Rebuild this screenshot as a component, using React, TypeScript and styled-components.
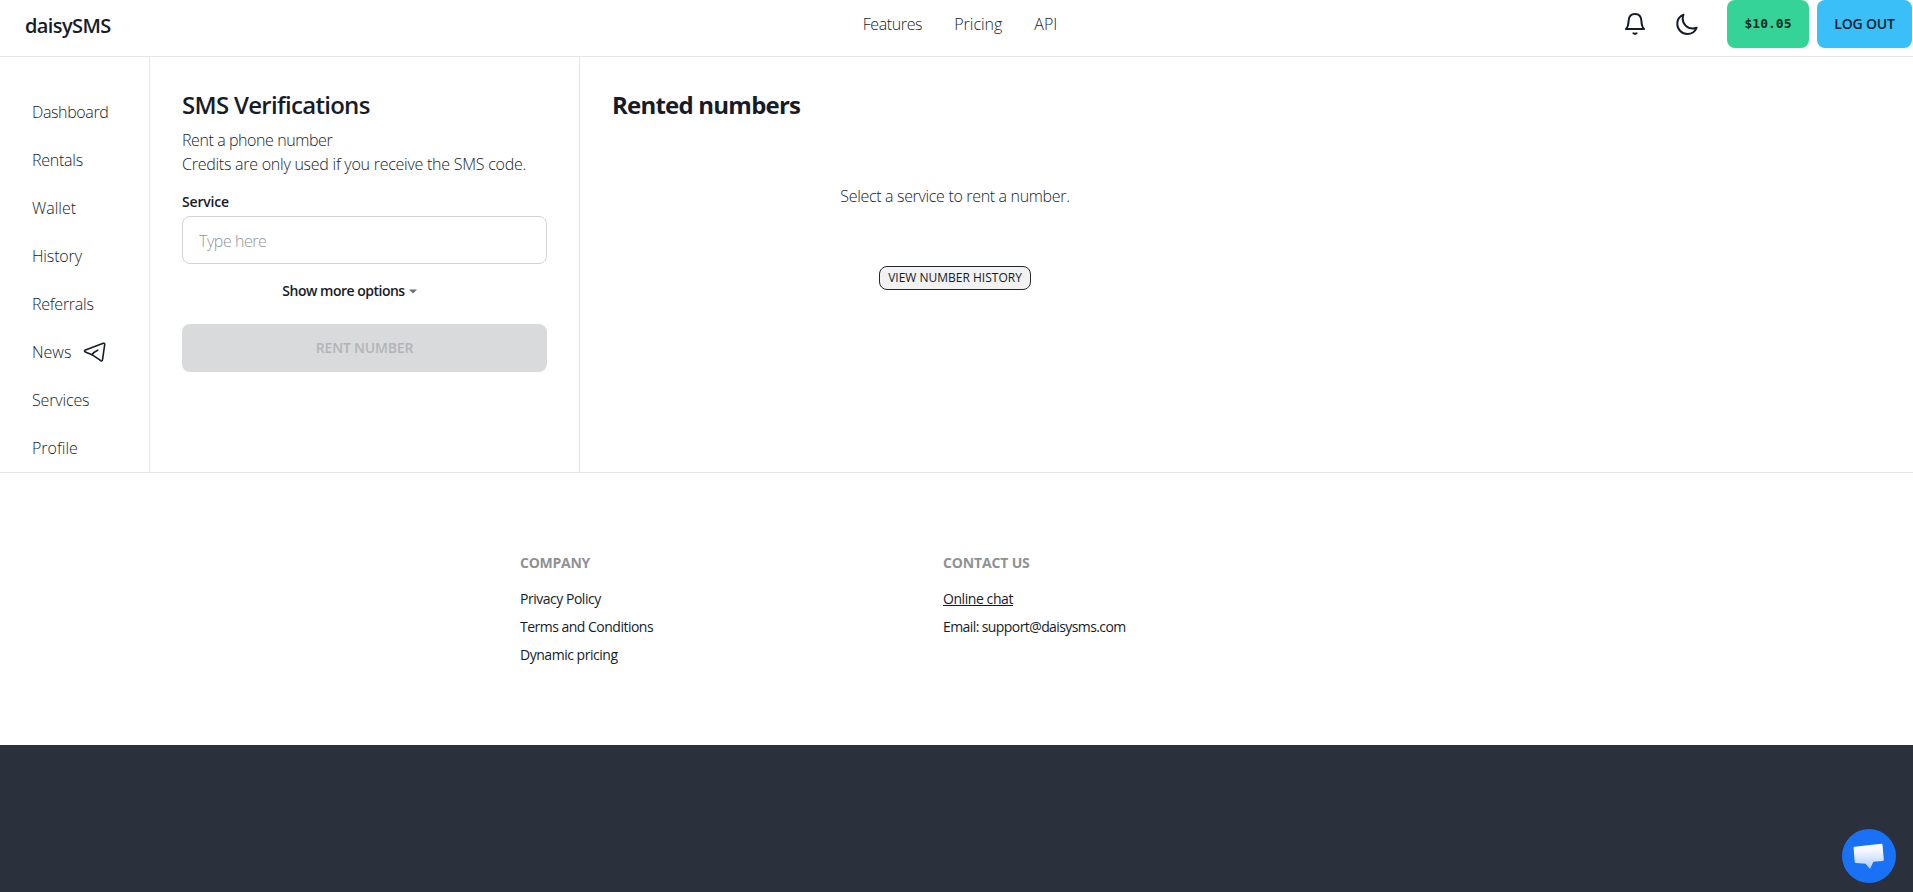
import React from 'react';
import styled, { createGlobalStyle } from 'styled-components';

const ink = '#161c27';
const line = '#e5e6e6';

const GlobalStyle = createGlobalStyle`
  *, *::before, *::after { box-sizing: border-box; }
  body {
    margin: 0;
    background: #ffffff;
    color: ${ink};
    font-family: 'Open Sans', 'Noto Sans', sans-serif;
    font-size: 16px;
    line-height: 24px;
  }
  a { color: inherit; text-decoration: none; }
  button, input { font-family: inherit; color: inherit; }
  h1, h2, h3, p, ul { margin: 0; padding: 0; }
`;

const Page = styled.div`
  display: flex;
  flex-direction: column;
  height: 892px;
  overflow: hidden;
`;

const Text = styled.span<{ $ls?: number }>`
  letter-spacing: ${(p) => p.$ls ?? 0}px;
  white-space: nowrap;
`;

const Header = styled.header`
  display: grid;
  grid-template-columns: 1fr auto 1fr;
  height: 57px;
  border-bottom: 1px solid ${line};
`;

const Logo = styled.a`
  padding: 12px 0 0 25px;
  font-size: 20px;
  line-height: 28px;
  font-weight: 600;
`;

const Nav = styled.nav`
  display: flex;
  gap: 32px;
  padding: 12px 0 0 7px;
  font-weight: 300;
`;

const Actions = styled.div`
  display: flex;
  justify-content: flex-end;
  align-items: flex-start;
  padding-right: 1px;
`;

const IconButton = styled.button`
  display: grid;
  place-items: center;
  width: 52px;
  height: 48px;
  padding: 0;
  border: 0;
  background: none;
`;

const Balance = styled.div`
  display: flex;
  margin-left: 6px;
`;

const HeaderButton = styled.button<{ $color: string; $width: number; $mono?: boolean }>`
  width: ${(p) => p.$width}px;
  height: 48px;
  margin-left: 8px;
  padding: 0;
  border: 0;
  border-radius: 8px;
  background: ${(p) => p.$color};
  color: #0b2233;
  font-size: 14px;
  line-height: 14px;
  font-weight: 600;
  ${(p) => p.$mono && "font-family: 'DejaVu Sans Mono', monospace; font-size: 13px; font-weight: 700; color: #06291b;"}
`;

const Main = styled.main`
  display: flex;
  height: 416px;
  border-bottom: 1px solid ${line};
`;

const Sidebar = styled.nav`
  width: 150px;
  padding-top: 31px;
  border-right: 1px solid ${line};
  font-weight: 300;
`;

const SideLink = styled.a`
  display: flex;
  align-items: center;
  gap: 12px;
  height: 48px;
  padding: 0 0 0 32px;
`;

const RentPanel = styled.section`
  display: flex;
  flex-direction: column;
  width: 430px;
  padding: 32px 32px 0;
  border-right: 1px solid ${line};
`;

const Title = styled.h2<{ $weight: number }>`
  font-size: 24px;
  line-height: 32px;
  font-weight: ${(p) => p.$weight};
`;

const Intro = styled.p`
  margin-top: 7px;
  font-weight: 300;
`;

const Label = styled.label`
  margin-top: 16px;
  font-size: 14px;
  line-height: 20px;
  font-weight: 600;
`;

const Input = styled.input<{ $ls: number }>`
  height: 48px;
  margin-top: 4px;
  padding: 2px 16px 0;
  border: 1px solid #d2d3d5;
  border-radius: 8px;
  font-size: 16px;
  font-weight: 300;
  letter-spacing: ${(p) => p.$ls}px;
  &::placeholder { color: #8f949c; opacity: 1; }
`;

const MoreOptions = styled.button`
  display: flex;
  align-items: center;
  align-self: center;
  gap: 4px;
  margin: 17px 30px 0 0;
  padding: 0;
  border: 0;
  background: none;
  font-size: 14px;
  line-height: 20px;
  font-weight: 600;
`;

const RentButton = styled.button`
  height: 48px;
  margin-top: 23px;
  padding: 0 0 1px;
  border: 0;
  border-radius: 8px;
  background: #d9dadb;
  color: #b2b4b7;
  font-size: 14px;
  font-weight: 600;
`;

const Rented = styled.section`
  width: 750px;
  padding: 32px 32px 0;
`;

const Empty = styled.div`
  display: flex;
  flex-direction: column;
  align-items: center;
  padding-top: 63px;
  font-weight: 300;
`;

const HistoryButton = styled.button`
  width: 152px;
  height: 24px;
  margin-top: 58px;
  padding: 0;
  border: 1px solid #22262e;
  border-radius: 8px;
  background: #f2f2f2;
  font-size: 12px;
  line-height: 12px;
  font-weight: 400;
`;

const Footer = styled.footer`
  display: grid;
  grid-template-columns: 423px 423px;
  height: 272px;
  padding: 80px 0 0 520px;
  font-size: 14px;
  line-height: 20px;
`;

const FooterColumn = styled.div`
  display: flex;
  flex-direction: column;
  align-items: flex-start;
  gap: 8px;
`;

const FooterTitle = styled.h3`
  margin-bottom: 8px;
  color: #8f9193;
  font-size: 14px;
  line-height: 20px;
  font-weight: 700;
`;

const FooterLink = styled.a<{ $underline?: boolean }>`
  text-decoration: ${(p) => (p.$underline ? 'underline' : 'none')};
`;

const DarkBand = styled.div`
  flex: 1;
  background: #2a303c;
`;

const ChatButton = styled.button`
  position: fixed;
  right: 17px;
  bottom: 9px;
  width: 54px;
  height: 54px;
  padding: 0;
  border: 0;
  border-radius: 50%;
  background: #1972f5;
`;

const Bell = () => (
  <svg width="24" height="24" viewBox="0 0 24 24" fill="none" stroke={ink} strokeWidth="2" strokeLinejoin="round" strokeLinecap="round">
    <path d="M2.900 17.100h18.200c-1.900-1.600-2.500-3.800-2.700-8.300C18.200 4.400 15.800 2 12 2S5.800 4.400 5.600 8.800c-.2 4.500-.8 6.700-2.700 8.300z" />
    <path d="M10.400 21.200c.8.900 2.400.9 3.200 0" />
  </svg>
);

const Moon = () => (
  <svg width="24" height="24" viewBox="0 0 24 24" fill="none" stroke={ink} strokeWidth="1.9" strokeLinejoin="round">
    <path transform="translate(-.8 .3) scale(1.030)" d="M21.752 15.002A9.718 9.718 0 0 1 18 15.750c-5.385 0-9.750-4.365-9.750-9.750 0-1.330.266-2.597.748-3.752A9.753 9.753 0 0 0 3 11.250C3 16.635 7.365 21 12.750 21a9.753 9.753 0 0 0 9.002-5.998Z" />
  </svg>
);

const Telegram = () => (
  <svg width="24" height="24" viewBox="0 0 24 24" fill="none" stroke={ink} strokeWidth="1.600" strokeLinejoin="round" strokeLinecap="round">
    <path d="M20.300 3.300 2.400 10.100c-1.200.5-1.200 1.500 0 2L9 14.700l8.800 6c.8.5 1.500.2 1.700-.8L21.700 4.500c.1-1-.5-1.500-1.400-1.200z" />
    <path d="M9 14.700c1-1.800 3-3.300 5.700-4.500" />
  </svg>
);

const ChatIcon = () => (
  <svg width="54" height="54" viewBox="0 0 54 54">
    <defs>
      <linearGradient id="bubble" x1="0" y1="0" x2="0" y2="1">
        <stop offset="0" stopColor="#ffffff" />
        <stop offset="0.300" stopColor="#f1f6ff" />
        <stop offset="1" stopColor="#a9cbfb" />
      </linearGradient>
    </defs>
    <path d="M12.700 17.700 39.200 14.800q1.200-.1 1.300 1l1.300 14.700q.1 1.400-1.200 1.600l-9.200.7L28 40l-4.400-5.300-9.600-.6q-1.200-.1-1.300-1.200l-1.100-14q-.1-1.100 1.100-1.200z" fill="url(#bubble)" />
  </svg>
);

const sideLinks: { label: string; ls: number }[] = [
  { label: 'Dashboard', ls: -0.38 },
  { label: 'Rentals', ls: -0.25 },
  { label: 'Wallet', ls: 0 },
  { label: 'History', ls: -0.15 },
  { label: 'Referrals', ls: -0.25 },
  { label: 'News', ls: 0 },
  { label: 'Services', ls: -0.15 },
  { label: 'Profile', ls: 0 },
];

export default function App() {
  return (
    <Page>
      <GlobalStyle />
      <Header>
        <Logo href="#"><Text $ls={-0.6}>daisySMS</Text></Logo>
        <Nav>
          <a href="#"><Text $ls={-0.38}>Features</Text></a>
          <a href="#"><Text>Pricing</Text></a>
          <a href="#"><Text>API</Text></a>
        </Nav>
        <Actions>
          <IconButton aria-label="Notifications"><Bell /></IconButton>
          <IconButton aria-label="Dark theme"><Moon /></IconButton>
          <Balance>
            <HeaderButton $color="#36d399" $width={82} $mono><Text>$10.05</Text></HeaderButton>
            <HeaderButton $color="#3abff8" $width={95}><Text $ls={-0.2}>LOG OUT</Text></HeaderButton>
          </Balance>
        </Actions>
      </Header>
      <Main>
        <Sidebar>
          {sideLinks.map(({ label, ls }) => (
            <SideLink href="#" key={label}>
              <Text $ls={ls}>{label}</Text>
              {label === 'News' && <Telegram />}
            </SideLink>
          ))}
        </Sidebar>
        <RentPanel>
          <Title $weight={600}><Text $ls={-0.7}>SMS Verifications</Text></Title>
          <Intro>
            <Text $ls={-0.42}>Rent a phone number</Text><br />
            <Text $ls={-0.25}>Credits are only used if you receive the SMS code.</Text>
          </Intro>
          <Label htmlFor="service"><Text $ls={-0.17}>Service</Text></Label>
          <Input id="service" placeholder="Type here" $ls={-0.45} />
          <MoreOptions>
            <Text $ls={-0.5}>Show more options</Text>
            <svg width="8" height="5" viewBox="0 0 8 5"><path d="M0 .5h8L4 4.500z" fill="#6b7078" /></svg>
          </MoreOptions>
          <RentButton disabled><Text $ls={-0.2}>RENT NUMBER</Text></RentButton>
        </RentPanel>
        <Rented>
          <Title $weight={700}><Text $ls={-0.78}>Rented numbers</Text></Title>
          <Empty>
            <Text as="p" $ls={-0.33}>Select a service to rent a number.</Text>
            <HistoryButton><Text>VIEW NUMBER HISTORY</Text></HistoryButton>
          </Empty>
        </Rented>
      </Main>
      <Footer>
        <FooterColumn>
          <FooterTitle><Text $ls={-0.26}>COMPANY</Text></FooterTitle>
          <FooterLink href="#"><Text $ls={-0.48}>Privacy Policy</Text></FooterLink>
          <FooterLink href="#"><Text $ls={-0.51}>Terms and Conditions</Text></FooterLink>
          <FooterLink href="#"><Text $ls={-0.47}>Dynamic pricing</Text></FooterLink>
        </FooterColumn>
        <FooterColumn>
          <FooterTitle><Text $ls={-0.15}>CONTACT US</Text></FooterTitle>
          <FooterLink href="#" $underline><Text $ls={-0.43}>Online chat</Text></FooterLink>
          <FooterLink as="span"><Text $ls={-0.59}>Email: support@daisysms.com</Text></FooterLink>
        </FooterColumn>
      </Footer>
      <DarkBand />
      <ChatButton aria-label="Open chat"><ChatIcon /></ChatButton>
    </Page>
  );
}
